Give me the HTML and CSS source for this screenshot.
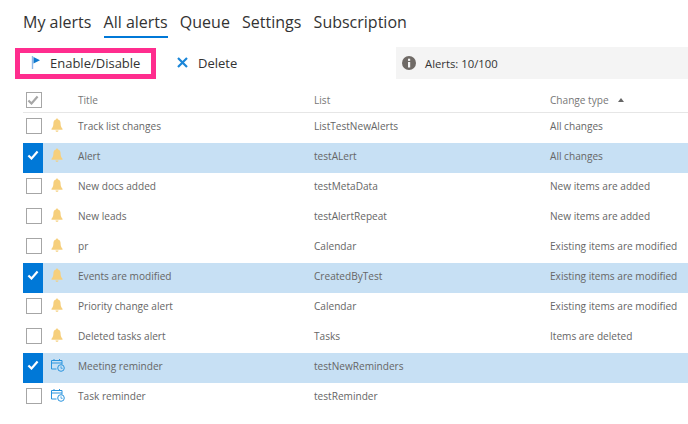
FILE: index.html
```html
<!DOCTYPE html>
<html lang="en">
<head>
<meta charset="utf-8">
<title>Alerts</title>
<link rel="stylesheet" href="styles.css">
</head>
<body>
<svg class="defs" width="0" height="0">
  <symbol id="bell" viewBox="0 0 12 14"><path d="M6 0.500c.7 0 1 .5 1 1 2 .5 2.600 2.200 2.600 4 0 2.600.7 4 1.900 5.200v1H.5v-1C1.700 9.500 2.400 8.100 2.400 5.500c0-1.800.6-3.500 2.600-4 0-.5.3-1 1-1zM4.500 12.500h3c0 .8-.7 1.300-1.500 1.300s-1.500-.5-1.500-1.300z" fill="#f6cf7c"/></symbol>
  <symbol id="cal" viewBox="0 0 14 14"><path d="M3 1v2M8.500 1v2M.5 2.500h10.500v4M.5 2.500v8.500h5M.5 5h10.500" fill="none" stroke="#2a94de" stroke-width="1"/><circle cx="10" cy="10" r="3.300" fill="none" stroke="#2a94de" stroke-width="1"/><path d="M10 8.300v2h1.600" fill="none" stroke="#2a94de" stroke-width=".8"/></symbol>
  <symbol id="tick" viewBox="0 0 14 12"><path d="M1.500 6.500l3.700 3.700 7.300-8.400" fill="none" stroke="currentColor" stroke-width="2.600"/></symbol>
</svg>
<nav class="tabs">
  <span class="tab">My alerts</span>
  <span class="tab tab-on">All alerts</span>
  <span class="tab">Queue</span>
  <span class="tab">Settings</span>
  <span class="tab">Subscription</span>
</nav>
<div class="toolbar">
  <div class="actions">
    <button class="btn btn-enable">
      <svg class="flag" width="10" height="13" viewBox="0 0 10 13"><path d="M1.500 0v13" stroke="#8db8e8" stroke-width="1.400"/><path d="M2.500 1l6.500 3.200-6.500 3.200z" fill="#0f7ad0"/></svg>
      Enable/Disable
    </button>
    <button class="btn btn-delete">
      <svg class="cross" width="11" height="11" viewBox="0 0 11 11"><path d="M1 1l9 9M10 1l-9 9" stroke="#1a86d8" stroke-width="2.200"/></svg>
      Delete
    </button>
  </div>
  <div class="info">
    <svg class="info-icon" width="14" height="14" viewBox="0 0 14 14"><circle cx="7" cy="7" r="7" fill="#6f6a66"/><rect x="6" y="6" width="2.200" height="5.500" fill="#f4f4f4"/><rect x="6" y="2.700" width="2.200" height="2.200" fill="#f4f4f4"/></svg>
    <span>Alerts: 10/100</span>
  </div>
</div>
<div class="grid">
  <div class="row head">
    <span class="check check-all"><svg width="12" height="10"><use href="#tick"/></svg></span>
    <span class="icon"></span>
    <span class="title">Title</span><span class="list">List</span>
    <span class="type">Change type <i class="sort"></i></span>
  </div>
  <div class="row"><span class="check"></span><span class="icon"><svg width="12" height="14"><use href="#bell"/></svg></span><span class="title">Track list changes</span><span class="list">ListTestNewAlerts</span><span class="type">All changes</span></div>
  <div class="row sel"><span class="check"><svg width="12" height="10"><use href="#tick"/></svg></span><span class="icon"><svg width="12" height="14"><use href="#bell"/></svg></span><span class="title">Alert</span><span class="list">testALert</span><span class="type">All changes</span></div>
  <div class="row"><span class="check"></span><span class="icon"><svg width="12" height="14"><use href="#bell"/></svg></span><span class="title">New docs added</span><span class="list">testMetaData</span><span class="type">New items are added</span></div>
  <div class="row"><span class="check"></span><span class="icon"><svg width="12" height="14"><use href="#bell"/></svg></span><span class="title">New leads</span><span class="list">testAlertRepeat</span><span class="type">New items are added</span></div>
  <div class="row"><span class="check"></span><span class="icon"><svg width="12" height="14"><use href="#bell"/></svg></span><span class="title">pr</span><span class="list">Calendar</span><span class="type">Existing items are modified</span></div>
  <div class="row sel"><span class="check"><svg width="12" height="10"><use href="#tick"/></svg></span><span class="icon"><svg width="12" height="14"><use href="#bell"/></svg></span><span class="title">Events are modified</span><span class="list">CreatedByTest</span><span class="type">Existing items are modified</span></div>
  <div class="row"><span class="check"></span><span class="icon"><svg width="12" height="14"><use href="#bell"/></svg></span><span class="title">Priority change alert</span><span class="list">Calendar</span><span class="type">Existing items are modified</span></div>
  <div class="row"><span class="check"></span><span class="icon"><svg width="12" height="14"><use href="#bell"/></svg></span><span class="title">Deleted tasks alert</span><span class="list">Tasks</span><span class="type">Items are deleted</span></div>
  <div class="row sel"><span class="check"><svg width="12" height="10"><use href="#tick"/></svg></span><span class="icon"><svg width="14" height="14"><use href="#cal"/></svg></span><span class="title">Meeting reminder</span><span class="list">testNewReminders</span><span class="type"></span></div>
  <div class="row"><span class="check"></span><span class="icon"><svg width="14" height="14"><use href="#cal"/></svg></span><span class="title">Task reminder</span><span class="list">testReminder</span><span class="type"></span></div>
</div>
</body>
</html>
```

FILE: styles.css
```css
* { box-sizing: border-box; }
html, body { margin: 0; height: 424px; overflow: hidden; }
body { background: #fff; font-family: "Open Sans", "Noto Sans", sans-serif; color: #333; }
.defs { position: absolute; }

.tabs { display: flex; gap: 12.200px; padding: 10px 0 0 23px; height: 38px; }
.tab { font-size: 16px; line-height: 24px; height: 28px; color: #333; white-space: nowrap; }
.tab-on { border-bottom: 2px solid #0078d7; }

.toolbar { display: flex; align-items: flex-start; height: 49px; padding: 9px 0 0 15px; }
.actions { display: flex; align-items: center; width: 381px; margin-top: 1px; }
.btn { display: flex; align-items: center; background: none; font: inherit; font-size: 13px; color: #333; padding: 0; }
.btn-enable { width: 141px; height: 31px; border: 5px solid #ff2d8e; padding: 0 0 2px 11px; gap: 9px; }
.btn-delete { border: 0; margin-left: 21px; padding-bottom: 2px; gap: 10px; }
.info { flex: 1; height: 32px; background: #f4f4f4; display: flex; align-items: center; gap: 9px; padding-left: 6px; font-size: 11.300px; }

.grid { font-size: 10.100px; color: #666; }
.row { display: flex; align-items: center; height: 30px; margin-left: 23px; white-space: nowrap; }
.row > .icon { padding-bottom: 6px; }
.row > .title, .row > .list, .row > .type { padding-bottom: 4px; }
.head { height: 26px; border-bottom: 1px solid #e6e6e6; color: #777; }
.head > .title, .head > .list, .head > .type { padding-bottom: 0; }
.check { width: 20px; height: 30px; display: flex; align-items: center; justify-content: center; padding-bottom: 6px; position: relative; flex: none; }
.row:not(.sel) .check::before { content: ""; position: absolute; left: 3px; top: 5px; width: 14px; height: 14px; border: 1px solid #a6a6a6; }
.head .check { height: 25px; padding-bottom: 0; }
.check-all { color: #a6a6a6; }
.sel { background: #c7e0f4; }
.sel .check { background: #0078d7; color: #fff; }
.icon { width: 35px; flex: none; display: flex; align-items: center; padding-left: 8px; }
.title { width: 236px; flex: none; }
.list { width: 236px; flex: none; }
.type { flex: 1; }
.sort { display: inline-block; margin-left: 7px; vertical-align: 2px; border: 3.500px solid transparent; border-top: 0; border-bottom: 4px solid #666; }
```
